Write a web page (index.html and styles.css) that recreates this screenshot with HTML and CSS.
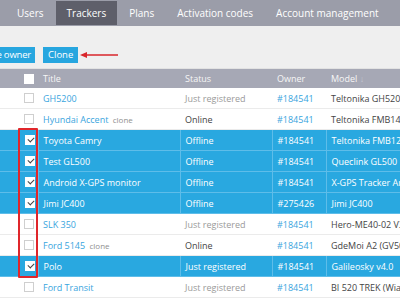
FILE: index.html
```html
<!DOCTYPE html>
<html lang="en">
  <head>
    <meta charset="UTF-8" />
    <title>Trackers</title>
    <link rel="stylesheet" href="styles.css">
  </head>
  <body>
    <nav class="topnav">
      <a href="#">Users</a>
      <a href="#" class="active">Trackers</a>
      <a href="#">Plans</a>
      <a href="#">Activation codes</a>
      <a href="#">Account management</a>
      <a href="#">Payments</a>
    </nav>

    <div class="toolbar">
      <div class="toolbar-left">
        <button class="btn first">Change owner</button>
      </div>
      <button class="btn">Clone</button>
      <svg class="arrow" width="38" height="8" viewBox="0 0 38 8">
        <line x1="6" y1="4" x2="38" y2="4" stroke="#d9262b" stroke-width="1.5" />
        <polygon points="0,4 7,1 7,7" fill="#d9262b" />
      </svg>
    </div>

    <div class="table-wrap">
      <table class="trackers">
        <thead>
          <tr>
            <th class="c-pad"></th>
            <th class="c-check"><span class="box head"></span></th>
            <th class="c-title">Title</th>
            <th class="c-status">Status</th>
            <th class="c-owner">Owner</th>
            <th class="c-model">Model <span class="sort">&#8595;</span></th>
          </tr>
        </thead>
        <tbody>
          <tr>
            <td></td>
            <td class="c-check"><span class="box"></span></td>
            <td><a href="#">GH5200</a></td>
            <td class="muted">Just registered</td>
            <td><a href="#">#184541</a></td>
            <td>Teltonika GH5200 (GPS)</td>
          </tr>
          <tr>
            <td></td>
            <td class="c-check"><span class="box"></span></td>
            <td><a href="#">Hyundai Accent</a> <span class="tag">clone</span></td>
            <td>Online</td>
            <td><a href="#">#184541</a></td>
            <td>Teltonika FMB140</td>
          </tr>
          <tr class="selected">
            <td></td>
            <td class="c-check"><span class="box checked"></span></td>
            <td>Toyota Camry</td>
            <td>Offline</td>
            <td>#184541</td>
            <td>Teltonika FMB120</td>
          </tr>
          <tr class="selected">
            <td></td>
            <td class="c-check"><span class="box checked"></span></td>
            <td>Test GL500</td>
            <td>Offline</td>
            <td>#184541</td>
            <td>Queclink GL500</td>
          </tr>
          <tr class="selected">
            <td></td>
            <td class="c-check"><span class="box checked"></span></td>
            <td>Android X-GPS monitor</td>
            <td>Offline</td>
            <td>#184541</td>
            <td>X-GPS Tracker Android</td>
          </tr>
          <tr class="selected">
            <td></td>
            <td class="c-check"><span class="box checked"></span></td>
            <td>Jimi JC400</td>
            <td>Offline</td>
            <td>#275426</td>
            <td>Jimi JC400</td>
          </tr>
          <tr>
            <td></td>
            <td class="c-check"><span class="box"></span></td>
            <td><a href="#">SLK 350</a></td>
            <td class="muted">Just registered</td>
            <td><a href="#">#184541</a></td>
            <td>Hero-ME40-02 V3</td>
          </tr>
          <tr>
            <td></td>
            <td class="c-check"><span class="box"></span></td>
            <td><a href="#">Ford 5145</a> <span class="tag">clone</span></td>
            <td>Online</td>
            <td><a href="#">#184541</a></td>
            <td>GdeMoi A2 (GV500)</td>
          </tr>
          <tr class="selected">
            <td></td>
            <td class="c-check"><span class="box checked"></span></td>
            <td>Polo</td>
            <td>Just registered</td>
            <td>#184541</td>
            <td>Galileosky v4.0</td>
          </tr>
          <tr>
            <td></td>
            <td class="c-check"><span class="box"></span></td>
            <td><a href="#">Ford Transit</a></td>
            <td class="muted">Just registered</td>
            <td><a href="#">#184541</a></td>
            <td>BI 520 TREK (Wialon)</td>
          </tr>
        </tbody>
      </table>
      <div class="highlight"></div>
    </div>
  </body>
</html>
```

FILE: styles.css
```css
body {
  margin: 0;
  width: 400px;
  height: 300px;
  overflow: hidden;
  font-family: "Open Sans", sans-serif;
  background-color: #ffffff;
  color: #444444;
}

.topnav {
  display: flex;
  gap: 1px;
  height: 26px;
  box-sizing: border-box;
  padding: 1px 0 1px 6px;
  background-color: #9b9da9;
}

.topnav a {
  display: flex;
  align-items: center;
  padding: 0 11px;
  color: #ffffff;
  font-size: 10px;
  text-decoration: none;
  white-space: nowrap;
}

.topnav a.active {
  background-color: #5e5f6a;
}

.toolbar {
  display: flex;
  align-items: center;
  gap: 8px;
  height: 43px;
  box-sizing: border-box;
  padding: 21px 0 6px;
  background-color: #efefef;
  border-bottom: 1px solid #e2e2e2;
}

.toolbar-left {
  display: flex;
  justify-content: flex-end;
  width: 35px;
  overflow: hidden;
  flex-shrink: 0;
}

.btn {
  height: 16px;
  padding: 0 5px;
  border: none;
  background-color: #27a6df;
  color: #ffffff;
  font-family: inherit;
  font-size: 9.5px;
  white-space: nowrap;
  flex-shrink: 0;
}

.btn.first {
  padding-right: 4px;
  letter-spacing: -0.2px;
}

.arrow {
  margin-left: -6px;
  flex-shrink: 0;
}

.table-wrap {
  position: relative;
}

.trackers {
  border-collapse: collapse;
  width: 478px;
  font-size: 9px;
  table-layout: fixed;
}

.trackers th {
  height: 19px;
  padding: 0 5px;
  background-color: #a6a8b5;
  color: #f6f6f6;
  font-weight: normal;
  text-align: left;
}

.trackers td {
  height: 20px;
  padding: 0 5px;
  border-bottom: 1px solid #ebebeb;
  white-space: nowrap;
  overflow: hidden;
}

.trackers .c-pad {
  width: 18px;
  padding: 0;
}

.trackers .c-check {
  width: 14px;
  padding: 0 0 0 6px;
}

.c-title {
  width: 132px;
}

.c-status {
  width: 82px;
}

.c-owner {
  width: 44px;
}

.c-model {
  width: 142px;
}

.sort {
  color: #c4c6cf;
}

.trackers a {
  color: #39a5de;
  text-decoration: none;
}

.muted {
  color: #9a9a9a;
}

.tag {
  color: #8f8f8f;
  font-size: 8px;
  margin-left: 2px;
}

.box {
  display: block;
  position: relative;
  width: 10px;
  height: 10px;
  box-sizing: border-box;
  border: 1px solid #cfcfcf;
  background-color: #ffffff;
}

.box.head {
  border: none;
}

.box.checked {
  border-color: #ffffff;
}

.box.checked::after {
  content: "";
  position: absolute;
  left: 2px;
  top: 1px;
  width: 5px;
  height: 3px;
  border-left: 1.5px solid #444444;
  border-bottom: 1.5px solid #444444;
  transform: rotate(-45deg);
}

.selected td {
  background-color: #29a8e0;
  color: #ffffff;
  border-bottom: 1px solid #5ebde9;
  border-left: 1px solid #5ebde9;
}

.selected td:first-child {
  border-left: none;
}

.highlight {
  position: absolute;
  left: 18px;
  top: 59px;
  width: 20px;
  height: 150px;
  box-sizing: border-box;
  border: 2px solid #e0262b;
  border-radius: 1px;
}
```
